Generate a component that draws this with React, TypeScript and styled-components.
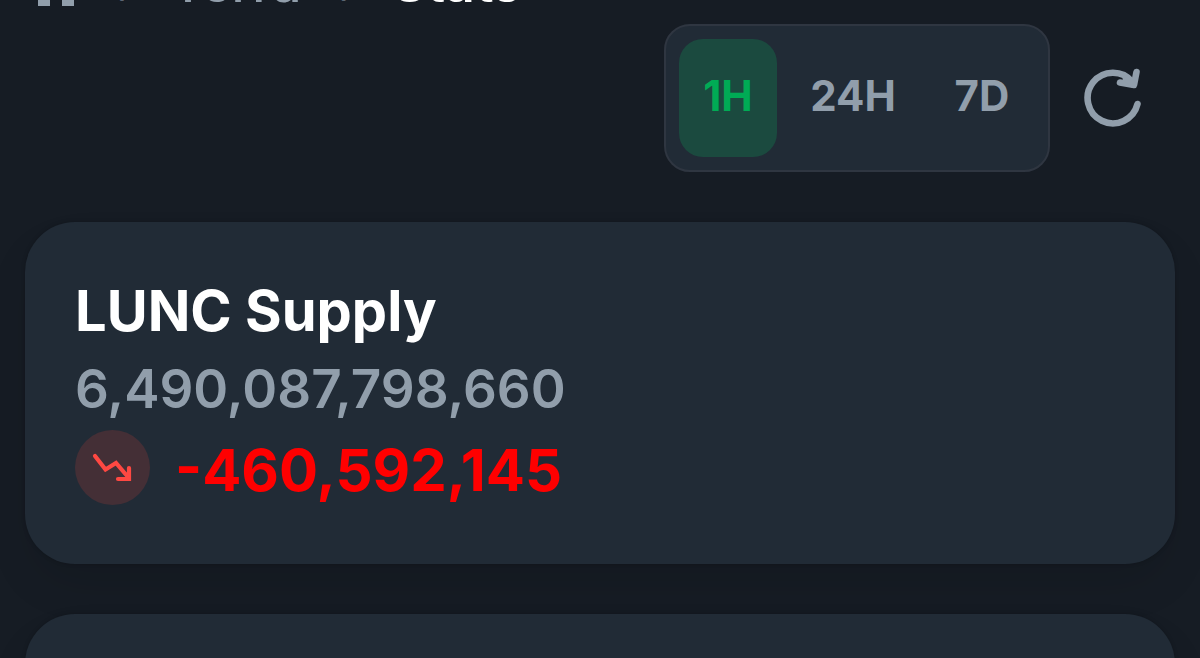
import React, { useState } from "react";
import styled, { createGlobalStyle } from "styled-components";

const GlobalStyle = createGlobalStyle`
  * { box-sizing: border-box; }
  body {
    margin: 0;
    background: #161c24;
    font-family: Inter, "Liberation Sans", sans-serif;
    color: #ffffff;
  }
`;

const Page = styled.main`
  height: 100vh;
  overflow: hidden;
  padding: 0 25px;
`;

const Breadcrumbs = styled.nav`
  display: flex;
  align-items: flex-end;
  height: 8px;
  overflow: hidden;
  padding-left: 8px;
  color: #919eab;
`;

const Crumb = styled.a<{ $current?: boolean }>`
  flex: none;
  color: ${(p) => (p.$current ? "#ffffff" : "#919eab")};
  font-size: 52px;
  line-height: 48px;
  font-weight: ${(p) => (p.$current ? 600 : 500)};
  text-decoration: none;
`;

const HomeLink = styled(Crumb)`
  display: flex;
  padding-bottom: 2px;
`;

const Separator = styled.span`
  flex: none;
  width: 91px;
  text-align: center;
  font-size: 36px;
  line-height: 36px;
`;

const Toolbar = styled.div`
  display: flex;
  justify-content: flex-end;
  align-items: center;
  gap: 32px;
  padding: 16px 31px 50px 0;
`;

const RangeGroup = styled.div`
  display: grid;
  grid-template-columns: 98px 134px 106px;
  gap: 9px;
  padding: 13px;
  border: 2px solid #2f3641;
  border-radius: 26px;
  background: #212b36;
`;

const RangeButton = styled.button<{ $active: boolean }>`
  height: 118px;
  padding: 0 0 6px;
  border: 0;
  border-radius: 24px;
  background: ${(p) => (p.$active ? "#1b4a3f" : "transparent")};
  color: ${(p) => (p.$active ? "#00ab55" : "#919eab")};
  font: inherit;
  font-size: 42px;
  font-weight: 700;
  cursor: pointer;
`;

const RefreshButton = styled.button`
  display: flex;
  padding: 0;
  border: 0;
  background: none;
  color: #919eab;
  cursor: pointer;
`;

const Cards = styled.div`
  display: grid;
  gap: 50px;
`;

const Card = styled.section`
  min-height: 342px;
  padding: 52px 50px;
  border-radius: 50px;
  background: #212b36;
  box-shadow: 0 0 4px rgba(0, 0, 0, 0.2), 0 24px 48px -8px rgba(0, 0, 0, 0.12);
`;

const Title = styled.h2`
  margin: 0;
  font-size: 56px;
  line-height: 74px;
  font-weight: 700;
`;

const Amount = styled.p`
  margin: 0;
  color: #919eab;
  font-size: 53px;
  line-height: 82px;
  font-weight: 600;
`;

const Change = styled.div`
  display: flex;
  align-items: center;
  gap: 25px;
  color: #ff0000;
  font-size: 58px;
  line-height: 80px;
  font-weight: 700;
`;

const TrendBadge = styled.span`
  display: flex;
  flex: none;
  align-self: flex-start;
  width: 75px;
  height: 75px;
  border-radius: 50%;
  background: #442f36;
`;

const ranges = ["1H", "24H", "7D"];

function TrendDownIcon() {
  return (
    <svg width="75" height="75" viewBox="0 0 75 75" fill="none" stroke="#ff4842" strokeWidth="4.200" strokeLinejoin="miter" strokeLinecap="round" aria-hidden="true">
      <path d="M20 26 30.500 39.500 41 33 53 47M54 38V49H43" />
    </svg>
  );
}

function RefreshIcon() {
  return (
    <svg width="62" height="62" viewBox="0 0 62 62" fill="none" stroke="currentColor" strokeWidth="6.600" strokeLinecap="round" strokeLinejoin="round" aria-hidden="true">
      <path d="M55.500 37A25.300 25.300 0 1 1 50.500 15" />
      <path d="M54.500 5 52 18 38 15.500" />
      <path d="M44 11.500 51 17.500" />
    </svg>
  );
}

export default function App() {
  const [range, setRange] = useState("1H");
  return (
    <>
      <GlobalStyle />
      <Page>
        <Breadcrumbs aria-label="Breadcrumb">
          <HomeLink href="#home" aria-label="Home">
            <svg width="47" height="44" viewBox="0 0 47 44" fill="currentColor" aria-hidden="true">
              <path d="M23.500 0 0 22H5V44H17V29H29V44H41V22H47Z" />
            </svg>
          </HomeLink>
          <Separator aria-hidden="true">›</Separator>
          <Crumb href="#terra">Terra</Crumb>
          <Separator aria-hidden="true">›</Separator>
          <Crumb href="#stats" $current aria-current="page">Stats</Crumb>
        </Breadcrumbs>
        <Toolbar>
          <RangeGroup role="group" aria-label="Time range">
            {ranges.map((r) => (
              <RangeButton key={r} type="button" $active={r === range} aria-pressed={r === range} onClick={() => setRange(r)}>
                {r}
              </RangeButton>
            ))}
          </RangeGroup>
          <RefreshButton type="button" aria-label="Refresh">
            <RefreshIcon />
          </RefreshButton>
        </Toolbar>
        <Cards>
          <Card>
            <Title>LUNC Supply</Title>
            <Amount>6,490,087,798,660</Amount>
            <Change>
              <TrendBadge>
                <TrendDownIcon />
              </TrendBadge>
              -460,592,145
            </Change>
          </Card>
          <Card />
        </Cards>
      </Page>
    </>
  );
}
